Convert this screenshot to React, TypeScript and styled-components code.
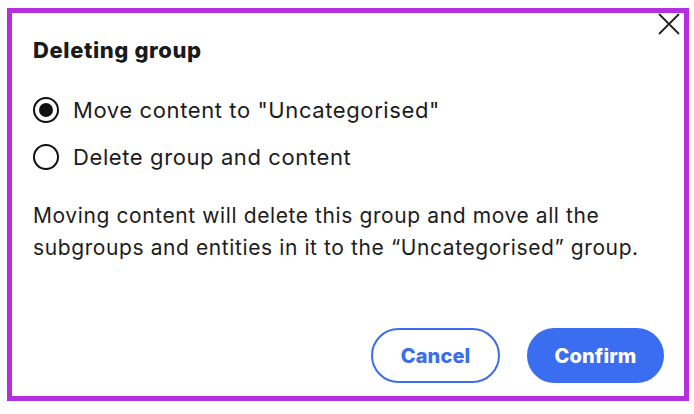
import React, { useState } from "react";
import styled, { createGlobalStyle } from "styled-components";

const Global = createGlobalStyle`
  html, body { margin: 0; padding: 0; background: #ffffff; }
  body { font-family: Inter, "Noto Sans", sans-serif; color: #1c1c1c; }
  * { box-sizing: border-box; }
`;

const Page = styled.div`
  padding: 8px 0 0 7px;
`;

const Dialog = styled.div`
  position: relative;
  width: 682px;
  height: 393px;
  border: 5px solid #b42fe0;
  background: #fff;
  display: flex;
  flex-direction: column;
  padding: 23px 20px 13px 21px;
`;

const CloseButton = styled.button`
  position: absolute;
  top: 0;
  right: 4px;
  width: 22px;
  height: 22px;
  padding: 0;
  border: none;
  background: none;
  cursor: pointer;
  display: flex;
  align-items: center;
  justify-content: center;
`;

const Title = styled.h2`
  margin: 0;
  font-family: Inter, sans-serif;
  font-weight: 800;
  font-size: 22px;
  line-height: 28px;
  letter-spacing: 0.6px;
  color: #1a1a1a;
`;

const Options = styled.div`
  display: flex;
  flex-direction: column;
  gap: 21px;
  margin-top: 33px;
`;

const OptionRow = styled.label`
  display: flex;
  align-items: center;
  gap: 14px;
  font-size: 22px;
  line-height: 26px;
  letter-spacing: 0.6px;
  color: #1c1c1c;
  cursor: pointer;
`;

const RadioCircle = styled.span<{ $checked: boolean }>`
  width: 26px;
  height: 26px;
  border-radius: 50%;
  border: 2px solid #111;
  display: flex;
  align-items: center;
  justify-content: center;
  flex-shrink: 0;
  &::after {
    content: "";
    width: 14px;
    height: 14px;
    border-radius: 50%;
    background: #111;
    display: ${(p) => (p.$checked ? "block" : "none")};
  }
`;

const Description = styled.p`
  margin: 30px 0 0;
  font-size: 21px;
  line-height: 32px;
  letter-spacing: 0.6px;
  color: #1c1c1c;
`;

const Footer = styled.div`
  margin-top: auto;
  display: flex;
  justify-content: flex-end;
  align-items: center;
  gap: 27px;
`;

const Button = styled.button<{ $primary?: boolean }>`
  height: 55px;
  padding: 0 24px;
  border-radius: 28px;
  font-family: Inter, sans-serif;
  font-weight: 800;
  font-size: 20px;
  letter-spacing: 0.1px;
  cursor: pointer;
  border: 2px solid #3a6df0;
  background: ${(p) => (p.$primary ? "#3a6df0" : "#fff")};
  color: ${(p) => (p.$primary ? "#fff" : "#3a6df0")};
  min-width: ${(p) => (p.$primary ? "137px" : "129px")};
`;

export default function App() {
  const [choice, setChoice] = useState("move");
  const options = [
    { id: "move", label: 'Move content to "Uncategorised"' },
    { id: "delete", label: "Delete group and content" },
  ];
  return (
    <Page>
      <Global />
      <Dialog>
        <CloseButton aria-label="Close">
          <svg width="22" height="22" viewBox="0 0 22 22">
            <path d="M1 1 L21 21 M21 1 L1 21" stroke="#222" strokeWidth="1.8" />
          </svg>
        </CloseButton>
        <Title>Deleting group</Title>
        <Options>
          {options.map((o) => (
            <OptionRow key={o.id} onClick={() => setChoice(o.id)}>
              <RadioCircle $checked={choice === o.id} />
              {o.label}
            </OptionRow>
          ))}
        </Options>
        <Description>
          Moving content will delete this group and move all the
          <br />
          subgroups and entities in it to the “Uncategorised” group.
        </Description>
        <Footer>
          <Button>Cancel</Button>
          <Button $primary>Confirm</Button>
        </Footer>
      </Dialog>
    </Page>
  );
}
